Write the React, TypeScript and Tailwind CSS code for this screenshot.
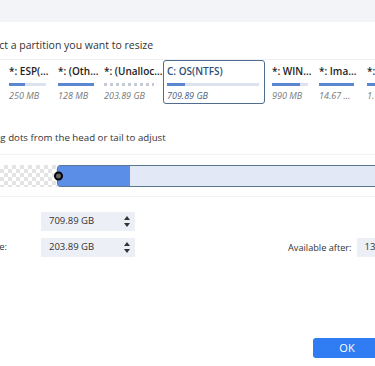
import React from "react";

type Card = {
  name: string;
  size: string;
  boxW: number;
  padL: number;
  barW: number;
  fill: number;
  dotted?: boolean;
  selected?: boolean;
};

const cards: Card[] = [
  { name: "*: ESP(...", size: "250 MB", boxW: 49, padL: 4, barW: 37, fill: 16 },
  { name: "*: (Oth...", size: "128 MB", boxW: 46, padL: 4, barW: 36, fill: 36 },
  { name: "*: (Unalloc...", size: "203.89 GB", boxW: 64, padL: 4, barW: 50, fill: 0, dotted: true },
  { name: "C: OS(NTFS)", size: "709.89 GB", boxW: 102, padL: 3, barW: 92, fill: 18, selected: true },
  { name: "*: WIN...", size: "990 MB", boxW: 49, padL: 6, barW: 36, fill: 28 },
  { name: "*: Ima...", size: "14.67 ...", boxW: 48, padL: 4, barW: 35, fill: 35 },
  { name: "*: 1.7...", size: "1.7...", boxW: 48, padL: 4, barW: 35, fill: 35 },
];

function PartitionCard({ c }: { c: Card }) {
  return (
    <div
      className={
        "flex h-[44px] shrink-0 flex-col rounded-[3px] " +
        (c.selected ? "border-[1.5px] border-[#4f6d8c]" : "border-[1.5px] border-transparent")
      }
      style={{ width: c.boxW, paddingLeft: c.padL }}
    >
      <div
        className={
          "mt-[4px] whitespace-nowrap text-[10px] font-semibold leading-[12px] " +
          (c.selected ? "text-[#2f4f78]" : "text-[#222]")
        }
      >
        {c.name}
      </div>
      {c.dotted ? (
        <div
          className="mt-[6px] h-[3px] bg-[repeating-linear-gradient(90deg,#c6cad2_0_3px,transparent_3px_6px)]"
          style={{ width: c.barW }}
        />
      ) : (
        <div className="mt-[6px] flex h-[3px] bg-[#dde3ee]" style={{ width: c.barW }}>
          <div className="h-full bg-[#5a87cf]" style={{ width: c.fill }} />
        </div>
      )}
      <div
        className={
          "mt-[4px] whitespace-nowrap text-[9px] italic leading-[11px] " +
          (c.selected ? "text-[#4a6485]" : "text-[#7a7a7a]")
        }
      >
        {c.size}
      </div>
    </div>
  );
}

function Spinner() {
  return (
    <div className="flex flex-col items-center gap-[3px]">
      <svg width="6" height="4" viewBox="0 0 6 4">
        <path d="M3 0 L6 4 L0 4 Z" fill="#333" />
      </svg>
      <svg width="6" height="4" viewBox="0 0 6 4">
        <path d="M0 0 L6 0 L3 4 Z" fill="#333" />
      </svg>
    </div>
  );
}

function NumberBox({ value }: { value: string }) {
  return (
    <div className="flex h-[19px] w-[94px] shrink-0 items-center justify-between bg-[#eceff5] pl-[8px] pr-[5px]">
      <span className="text-[9.5px] text-[#333]">{value}</span>
      <Spinner />
    </div>
  );
}

export default function App() {
  return (
    <div
      className="relative h-[366px] w-[375px] overflow-hidden bg-white text-[#333]"
      style={{ fontFamily: '"Open Sans", "Noto Sans", sans-serif' }}
    >
      <div className="h-[22px] bg-[#f3f4f8]" />

      <div className="ml-[-21px] mt-[16px] h-[14px] whitespace-nowrap text-[10.5px] leading-[14px] text-[#333]">
        Select a partition you want to resize
      </div>

      <div className="mt-[7px] h-px bg-[#eef0f3]" />

      <div className="ml-[4px] flex">
        {cards.map((c) => (
          <PartitionCard key={c.name} c={c} />
        ))}
      </div>

      <div className="ml-[-16px] mt-[27px] h-[14px] whitespace-nowrap text-[9.7px] leading-[14px] text-[#333]">
        Drag dots from the head or tail to adjust
      </div>

      <div className="mt-[9px] h-px bg-[#f1f2f4]" />

      <div className="mt-[10px] flex h-[22px]">
        <div className="h-full w-[57px] shrink-0 bg-[repeating-conic-gradient(#e4e4e4_0_25%,#ffffff_0_50%)] [background-size:8px_8px]" />
        <div className="relative flex h-full w-[340px] shrink-0 overflow-visible rounded-l-[3px] border-[1.5px] border-[#5b7893]">
          <div className="h-full w-[72px] bg-[#5b8ee6]" />
          <div className="h-full flex-1 bg-[#e3e8f7]" />
          <div className="absolute left-[-4px] top-1/2 h-[9px] w-[9px] -translate-y-1/2 rounded-full border-2 border-black bg-[#666]" />
        </div>
      </div>

      <div className="mt-[9px] h-px bg-[#f1f2f4]" />

      <div className="mt-[15px] flex items-center">
        <div className="flex w-[7px] shrink-0 justify-end whitespace-nowrap text-[9.5px]">
          <span className="mr-[14px]">Size:</span>
        </div>
        <div className="w-[34px] shrink-0" />
        <NumberBox value="709.89 GB" />
      </div>

      <div className="mt-[7px] flex items-center">
        <div className="flex w-[7px] shrink-0 justify-end whitespace-nowrap text-[9.5px]">
          <span>Unallocated space before:</span>
        </div>
        <div className="w-[34px] shrink-0" />
        <NumberBox value="203.89 GB" />
        <span className="ml-[153px] shrink-0 whitespace-nowrap text-[9.2px] text-[#333]">
          Available after:
        </span>
        <div className="ml-[5px] flex h-[19px] w-[40px] shrink-0 items-center bg-[#eceff5] pl-[8px] text-[9.5px]">
          13
        </div>
      </div>

      <div className="mt-[81px] flex">
        <button className="ml-[313px] flex h-[20px] w-[68px] shrink-0 items-center justify-center rounded-[3px] bg-[#2f7cf3] text-[11px] text-white">
          OK
        </button>
      </div>
    </div>
  );
}
